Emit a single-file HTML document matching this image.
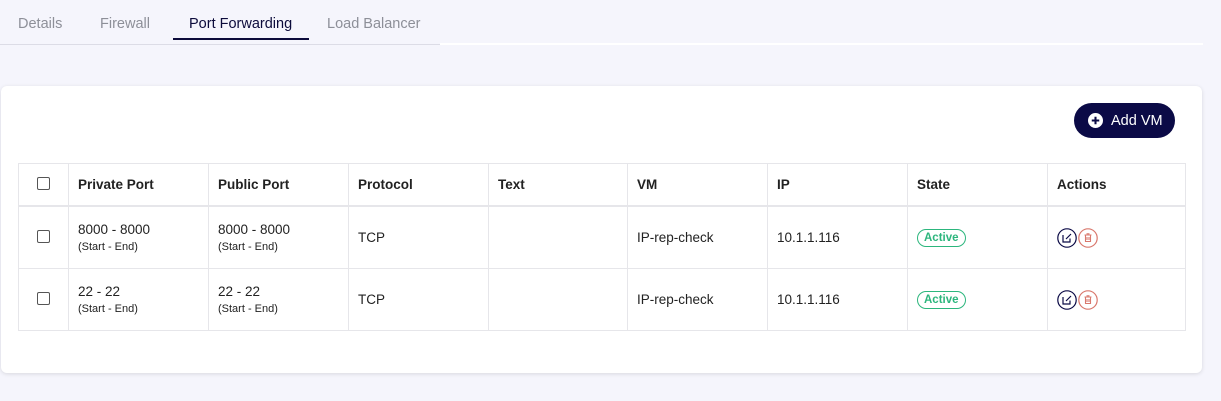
<!DOCTYPE html>
<html><head><style>
body{margin:0;width:1221px;height:401px;background:#f5f5fc;font-family:"Liberation Sans",sans-serif;position:relative;overflow:hidden}
.tabs{position:absolute;left:0;top:0;height:44px;width:440px;border-bottom:1px solid #dcdce6}
.wl{position:absolute;left:440px;top:43px;width:763px;height:2px;background:#fff}
.tab{position:absolute;top:16px;font-size:14.5px;color:#8d8f98}
.tab.act{color:#0c0b3b}
.ul{position:absolute;left:173px;top:38px;width:136px;height:2px;background:#0c0b3b}
.card{position:absolute;left:1px;top:86px;width:1201px;height:287px;background:#fff;border-radius:6px;box-shadow:0 1px 4px rgba(0,0,0,.12)}
.btn{position:absolute;left:1074px;top:103px;width:101px;height:35px;border-radius:18px;background:#0b0a46;color:#fff;font-size:14.5px;line-height:36px}
.btn span{position:absolute;left:37px}
table{position:absolute;left:18px;top:163px;border-collapse:collapse;font-size:13.5px;color:#222}
td{border:1px solid #e6e6ea;padding:0 0 0 9px;vertical-align:middle}
tr.h td{height:41px;font-weight:bold;border-bottom:2px solid #e6e6ea}
tr.r td{height:61px}
.sm{font-size:11px;display:block;margin-top:4px}
.cb{display:inline-block;width:11px;height:11px;border:1px solid #555;border-radius:2px;margin-left:9px}
.badge{display:inline-block;border:1px solid #2cb67d;color:#2cb67d;border-radius:10px;font-size:11.5px;font-weight:bold;padding:2px 6px}
.ic{display:inline-block;width:20px;height:20px;vertical-align:middle;margin-right:1px}
</style></head><body>
<div class="tabs"></div><div class="wl"></div>
<div class="tab" style="left:18px">Details</div>
<div class="tab" style="left:100px">Firewall</div>
<div class="tab act" style="left:189px">Port Forwarding</div>
<div class="tab" style="left:327px">Load Balancer</div>
<div class="ul"></div>
<div class="card"></div>
<div class="btn"><svg style="position:absolute;left:14px;top:10px" width="15" height="15" viewBox="0 0 16 16"><circle cx="8" cy="8" r="8" fill="#fff"/><path d="M8 4v8M4 8h8" stroke="#0b0a46" stroke-width="2.2"/></svg><span>Add VM</span></div>
<table>
<tr class="h"><td style="width:40px"><span class="cb"></span></td><td style="width:130px">Private Port</td><td style="width:130px">Public Port</td><td style="width:130px">Protocol</td><td style="width:129px">Text</td><td style="width:130px">VM</td><td style="width:130px">IP</td><td style="width:130px">State</td><td style="width:128px">Actions</td></tr>
<tr class="r"><td><span class="cb"></span></td><td>8000 - 8000<span class="sm">(Start - End)</span></td><td>8000 - 8000<span class="sm">(Start - End)</span></td><td>TCP</td><td></td><td>IP-rep-check</td><td>10.1.1.116</td><td><span class="badge">Active</span></td><td>
<svg class="ic" viewBox="0 0 20 20"><circle cx="10" cy="10" r="9.2" fill="none" stroke="#0b0a46" stroke-width="1.2"/><path d="M6 7v7h7v-3.5M9 11l5-5" stroke="#0b0a46" fill="none" stroke-width="1.2"/></svg><svg class="ic" viewBox="0 0 20 20"><circle cx="10" cy="10" r="9.2" fill="none" stroke="#d9786d" stroke-width="1.2"/><path d="M6.5 7h7M7.5 7v6.5h5V7M8.5 5.8h3M9 9v3M11 9v3" stroke="#d9786d" fill="none" stroke-width="1.1"/></svg></td></tr>
<tr class="r"><td><span class="cb"></span></td><td>22 - 22<span class="sm">(Start - End)</span></td><td>22 - 22<span class="sm">(Start - End)</span></td><td>TCP</td><td></td><td>IP-rep-check</td><td>10.1.1.116</td><td><span class="badge">Active</span></td><td>
<svg class="ic" viewBox="0 0 20 20"><circle cx="10" cy="10" r="9.2" fill="none" stroke="#0b0a46" stroke-width="1.2"/><path d="M6 7v7h7v-3.5M9 11l5-5" stroke="#0b0a46" fill="none" stroke-width="1.2"/></svg><svg class="ic" viewBox="0 0 20 20"><circle cx="10" cy="10" r="9.2" fill="none" stroke="#d9786d" stroke-width="1.2"/><path d="M6.5 7h7M7.5 7v6.5h5V7M8.5 5.8h3M9 9v3M11 9v3" stroke="#d9786d" fill="none" stroke-width="1.1"/></svg></td></tr>
</table>
</body></html>
